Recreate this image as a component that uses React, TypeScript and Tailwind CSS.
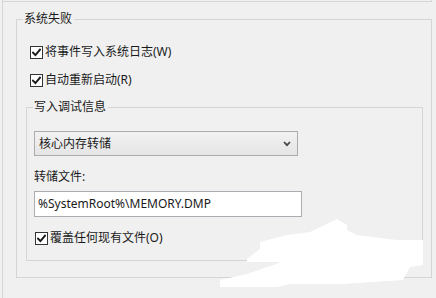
import type { ReactNode } from "react";

const line = "border-[#d5d5d5]";

const CheckIcon = () => (
  <svg width="9" height="9" viewBox="0 0 9 9" className="block">
    <path
      d="M1 4.6 L3.4 7 L8 1.6"
      fill="none"
      stroke="#1a1a1a"
      strokeWidth="1.9"
      strokeLinecap="square"
    />
  </svg>
);

const CheckRow = ({ label, className = "" }: { label: string; className?: string }) => (
  <label className={`flex h-[16px] items-center gap-[2px] ${className}`}>
    <span className="flex h-[13px] w-[13px] items-center justify-center border border-[#333333] bg-white">
      <CheckIcon />
    </span>
    <span className="leading-[16px]">{label}</span>
  </label>
);

const GroupBox = ({
  title,
  width,
  bodyHeight,
  bodyClass,
  children,
}: {
  title: string;
  width: string;
  bodyHeight: string;
  bodyClass: string;
  children: ReactNode;
}) => (
  <div className={`flex flex-col ${width}`}>
    <div className="flex h-[16px]">
      <div className={`h-[8px] w-[7px] self-end border-l border-t ${line}`} />
      <span className="pl-px pr-[2px] leading-[16px]">{title}</span>
      <div className={`h-[8px] flex-1 self-end border-r border-t ${line}`} />
    </div>
    <div className={`border-x border-b ${line} ${bodyHeight} ${bodyClass}`}>{children}</div>
  </div>
);

export default function App() {
  return (
    <div
      className="relative h-[298px] w-[436px] overflow-hidden bg-[#f0f0f0] text-[12px] text-[#1a1a1a]"
      style={{ fontFamily: '"Noto Sans", "Noto Sans CJK SC", sans-serif' }}
    >
      <div className={`ml-[2px] h-full border-l ${line}`}>
        <div className={`h-[2px] w-[429px] border-b border-r ${line}`} />

        <div className="ml-[13px] mt-[9px]">
          <GroupBox title="系统失败" width="w-[416px]" bodyHeight="h-[251px]" bodyClass="pl-[9px] pt-[17px]">
            <CheckRow label="将事件写入系统日志(W)" className="pl-[4px]" />
            <CheckRow label="自动重新启动(R)" className="mt-[12px] pl-[4px]" />

            <div className="mt-[11px]">
              <GroupBox title="写入调试信息" width="w-[397px]" bodyHeight="h-[146px]" bodyClass="pl-[7px] pt-[16px]">
                <div className="flex h-[25px] w-[264px] items-center justify-between border border-[#acacac] bg-gradient-to-b from-[#f2f2f2] to-[#e5e5e5] pl-[4px] pr-[6px]">
                  <span className="leading-[16px]">核心内存转储</span>
                  <svg width="8" height="6" viewBox="0 0 8 6" className="block">
                    <path d="M1 1 L4 4.2 L7 1" fill="none" stroke="#444444" strokeWidth="1.7" />
                  </svg>
                </div>

                <div className="mt-[13px] leading-[16px]">转储文件:</div>

                <div className="mt-[6px] flex h-[26px] w-[268px] items-center border border-[#abadb3] bg-white pl-[3px]">
                  <span className="leading-[16px]">%SystemRoot%\MEMORY.DMP</span>
                </div>

                <CheckRow label="覆盖任何现有文件(O)" className="mt-[13px] pl-px" />
              </GroupBox>
            </div>
          </GroupBox>
        </div>
      </div>

      {/* white scribble over the lower right corner */}
      <svg className="pointer-events-none absolute left-0 top-0" width="436" height="298" viewBox="0 0 436 298">
        <polygon
          fill="#ffffff"
          points="220,287 220,280 247,274 282,262 247,262 247,259 260,249 260,242 287,235 310,232 337,219 347,225 347,230 357,235 397,240 423,240 423,265 410,267 403,280 343,284 290,284 277,287"
        />
      </svg>
    </div>
  );
}
